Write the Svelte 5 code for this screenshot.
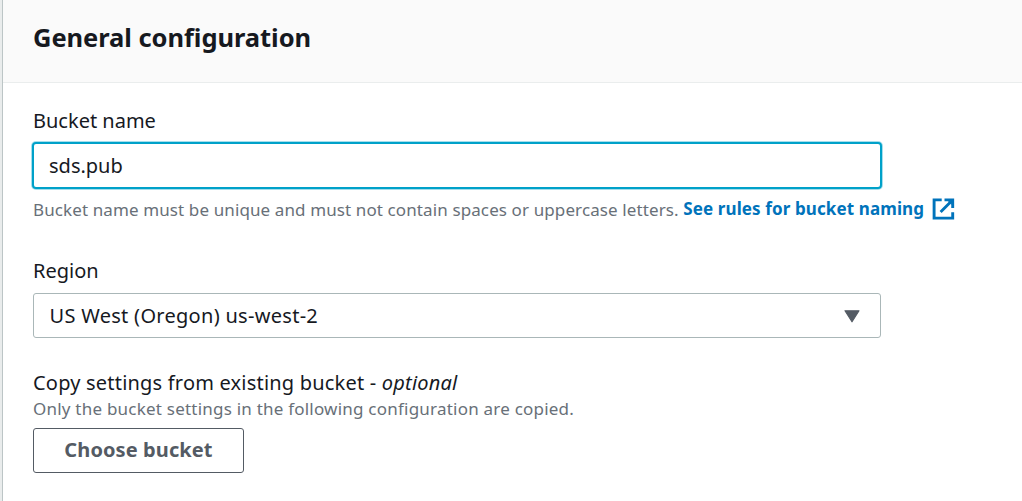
<script>
  let bucketName = $state('sds.pub');
</script>

<main class="panel">
  <header><h2>General configuration</h2></header>
  <section class="body">
    <div class="field">
      <label class="label name-label" for="bucket">Bucket name</label>
      <input id="bucket" bind:value={bucketName} />
      <p class="hint rules">
        <span class="rule-text">Bucket name must be unique and must not contain spaces or uppercase letters.</span>
        <a href="#rules">See rules for bucket naming</a>
        <svg width="24" height="24" viewBox="0 0 24 24" fill="none" stroke="#0073bb" stroke-width="2.9">
          <path d="M9.7 2.9H2.1V21.1H20.7V15.2M12.5 2.9H20.7V11M20.3 3.3L8.6 15" />
          <path d="M15.8 4.2H19.6V8Z" fill="#0073bb" stroke="none" />
        </svg>
      </p>
    </div>
    <div class="field region">
      <span class="label region-label">Region</span>
      <div class="select">
        <span>US West (Oregon) us-west-2</span>
        <svg width="16" height="13" viewBox="0 0 16 13"><path d="M1 .8H15L8 11.8Z" fill="#545b64" stroke="#545b64" stroke-width="1.2" stroke-linejoin="round" /></svg>
      </div>
    </div>
    <div class="field copy">
      <span class="label copy-label">Copy settings from existing bucket - <em>optional</em></span>
      <p class="hint copied">Only the bucket settings in the following configuration are copied.</p>
      <button>Choose bucket</button>
    </div>
  </section>
</main>

<style>
  :global(body) { margin: 0; background: #e9ecec; overflow: hidden; }
  .panel {
    box-sizing: border-box;
    height: 501px;
    margin-left: 2px;
    border-left: 1px solid #bcc5c6;
    background: #fff;
    color: #16191f;
    font-family: "Noto Sans", sans-serif;
    font-size: 20px;
  }
  header {
    box-sizing: border-box;
    height: 83px;
    padding: 19px 30px 0;
    border-bottom: 1px solid #eaeded;
    background: #fafafa;
  }
  h2 { margin: 0; font-size: 25.5px; line-height: 36px; font-weight: 700; letter-spacing: -.05px; white-space: nowrap; }
  .body { padding: 24px 30px 0; }
  .field { display: flex; flex-direction: column; align-items: flex-start; }
  .label { line-height: 28px; white-space: nowrap; }
  input {
    box-sizing: border-box;
    width: 850px;
    height: 47px;
    margin: 7px 0 0 -1px;
    padding: 0 16px 0 15px;
    border: 2px solid #00a1c9;
    border-radius: 4px;
    box-shadow: 0 0 0 1px rgba(0, 161, 201, .35);
    outline: none;
    background: #fff;
    color: #16191f;
    font: inherit;
  }
  .hint { margin: 0; color: #687078; font-size: 17px; line-height: 24px; white-space: nowrap; }
  .rules { display: flex; align-items: center; margin-top: 8px; letter-spacing: .11px; }
  .rule-text { position: relative; top: 1px; }
  a { margin-left: 4.5px; color: #0073bb; font-weight: 700; text-decoration: none; }
  .rules svg { margin-left: 8px; }
  .region { margin-top: 36px; }
  .select {
    box-sizing: border-box;
    display: flex;
    align-items: center;
    justify-content: space-between;
    width: 848px;
    height: 45px;
    margin-top: 8px;
    padding: 0 20px 0 15.5px;
    border: 1px solid #aab7b8;
    border-radius: 3px;
    letter-spacing: .29px;
    white-space: nowrap;
  }
  .select svg { margin-top: 2px; }
  .copy { margin-top: 31px; }
  .copy-label { letter-spacing: .2px; }
  .copied { line-height: 24px; letter-spacing: .22px; }
  button {
    box-sizing: border-box;
    width: 211px;
    height: 45px;
    margin-top: 7px;
    padding: 0 0 2px;
    border: 1px solid #545b64;
    border-radius: 3px;
    background: #fff;
    color: #545b64;
    font: 700 20px "Noto Sans", sans-serif;
    letter-spacing: .1px;
    white-space: nowrap;
  }
</style>
